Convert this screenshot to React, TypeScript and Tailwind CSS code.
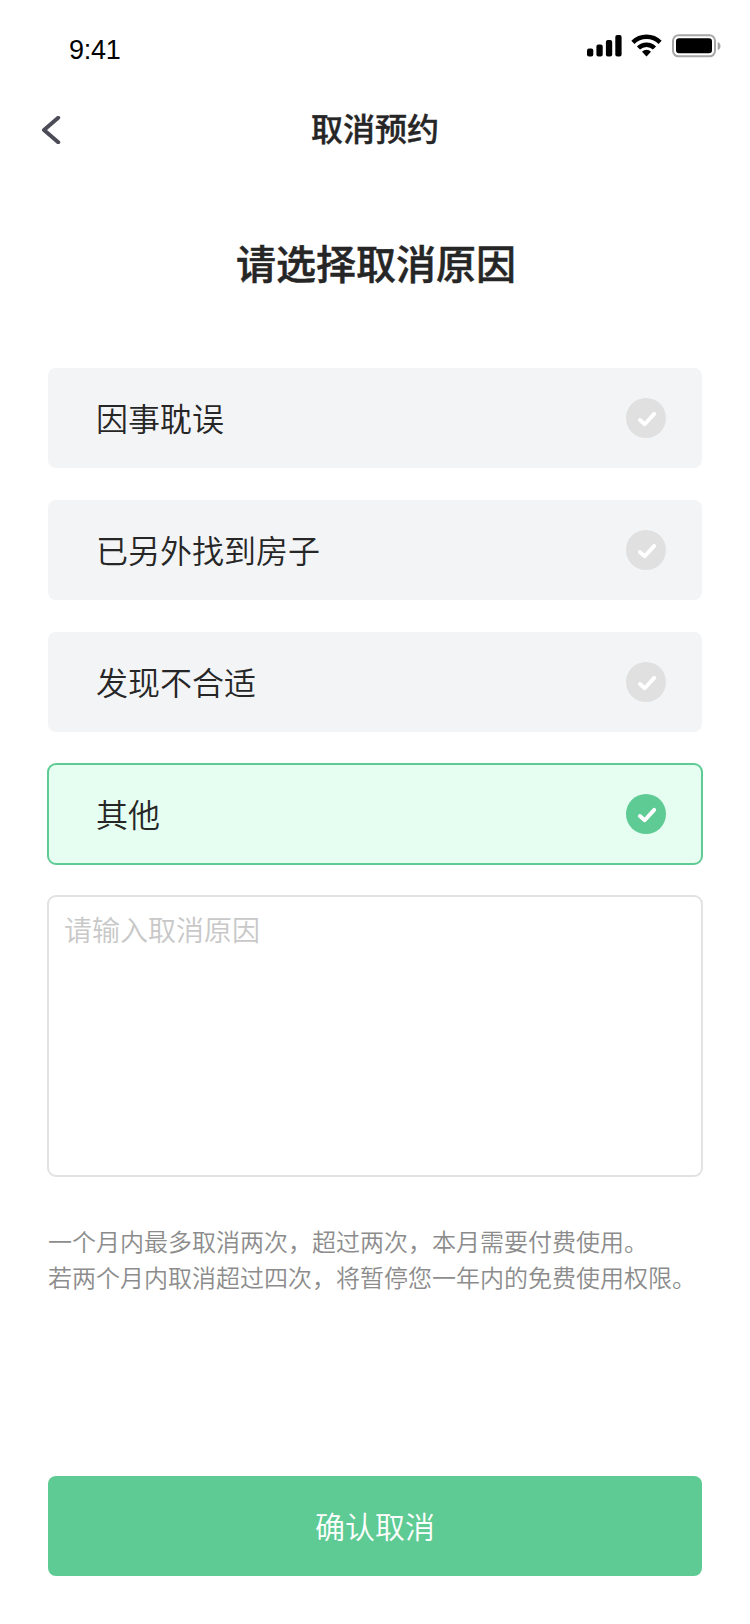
import React, { useState } from "react";

const reasons: string[] = ["因事耽误", "已另外找到房子", "发现不合适", "其他"];

function StatusBar() {
  return (
    <header className="flex h-[88px] items-start justify-between pl-[69px] pr-[29px]">
      <span className="mt-[32px] font-['Liberation_Sans',sans-serif] text-[27px] leading-[36px] tracking-[-0.3px] text-black">9:41</span>
      <svg className="mt-[34px]" width="134" height="24" viewBox="0 0 134 24" fill="none">
        <rect x="0" y="14.5" width="6.3" height="8" rx="2" fill="#000" />
        <rect x="9.4" y="10.5" width="6.3" height="12" rx="2" fill="#000" />
        <rect x="18.9" y="6" width="6.3" height="16.5" rx="2" fill="#000" />
        <rect x="28.3" y="1" width="6.3" height="21.5" rx="2" fill="#000" />
        <path d="M45.9 8.4A19.3 19.3 0 0 1 73.1 8.4M51.5 14A11.3 11.3 0 0 1 67.5 14" stroke="#000" strokeWidth="4.4" />
        <path d="M59.5 22.5L55 17.8A6 6 0 0 1 64 17.8Z" fill="#000" />
        <rect x="86" y="1.3" width="42" height="21" rx="5.5" stroke="#a6a6a6" strokeWidth="2" />
        <rect x="89" y="4.3" width="36" height="15" rx="3" fill="#000" />
        <path d="M130.7 8Q133.5 9 133.5 12T130.7 16Z" fill="#a6a6a6" />
      </svg>
    </header>
  );
}

function Check({ selected }: { selected: boolean }) {
  return (
    <svg width="40" height="40" viewBox="0 0 40 40" fill="none">
      <circle cx="20" cy="20" r="20" fill={selected ? "#5fcb94" : "#e0e0e0"} />
      <path d="M13.9 22L18.7 26.2L28.2 15.9" stroke="#fff" strokeWidth="3.9" strokeLinecap="round" strokeLinejoin="round" />
    </svg>
  );
}

export default function App() {
  const [selected, setSelected] = useState(3);
  return (
    <main className="flex h-[1624px] w-[750px] flex-col bg-white font-['Noto_Sans_CJK_SC',sans-serif] font-[350] text-[#262626]">
      <StatusBar />
      <nav className="grid h-[84px] grid-cols-[80px_1fr_80px] items-center">
        <button aria-label="返回" className="pl-[41px]">
          <svg width="20" height="28" viewBox="0 0 20 28" fill="none">
            <path d="M17.2 1.8L3 14L17.2 26.2" stroke="#4b4c58" strokeWidth="4" strokeLinecap="round" strokeLinejoin="round" />
          </svg>
        </button>
        <h1 className="pb-[6px] text-center text-[32px] font-medium leading-[48px] [-webkit-text-stroke:0.4px_#262626]">取消预约</h1>
      </nav>
      <h2 className="mt-[60px] pl-[2px] text-center text-[40px] font-medium leading-[60px] [-webkit-text-stroke:0.5px_#262626]">请选择取消原因</h2>
      <div className="mx-[48px] mt-[76px] flex flex-col gap-[32px]">
        {reasons.map((reason, i) => (
          <button
            key={reason}
            onClick={() => setSelected(i)}
            className={`flex h-[100px] items-center justify-between rounded-[8px] pl-[48px] pr-[36px] text-[32px] ${selected === i ? "bg-[#e6fdf1] outline-2 outline-[#5fcb94] -outline-offset-1" : "bg-[#f3f4f6]"}`}
          >
            <span className="pb-[3px]">{reason}</span>
            <Check selected={selected === i} />
          </button>
        ))}
      </div>
      <textarea
        placeholder="请输入取消原因"
        className="mx-[47px] mt-[31px] h-[282px] shrink-0 resize-none rounded-[9px] border-2 border-[#e2e2e2] px-[15px] py-[11px] text-[28px] leading-[42px] placeholder:text-[#c8c8c8]"
      />
      <p className="mx-[48px] mt-[46px] whitespace-nowrap text-[24px] leading-[36px] text-[#8c8c8c]">
        一个月内最多取消两次，超过两次，本月需要付费使用。<br />
        若两个月内取消超过四次，将暂停您一年内的免费使用权限。
      </p>
      <button className="mx-[48px] mb-[48px] mt-auto h-[100px] rounded-[8px] bg-[#5fcb94] pb-[1px] text-[30px] text-white">确认取消</button>
    </main>
  );
}
